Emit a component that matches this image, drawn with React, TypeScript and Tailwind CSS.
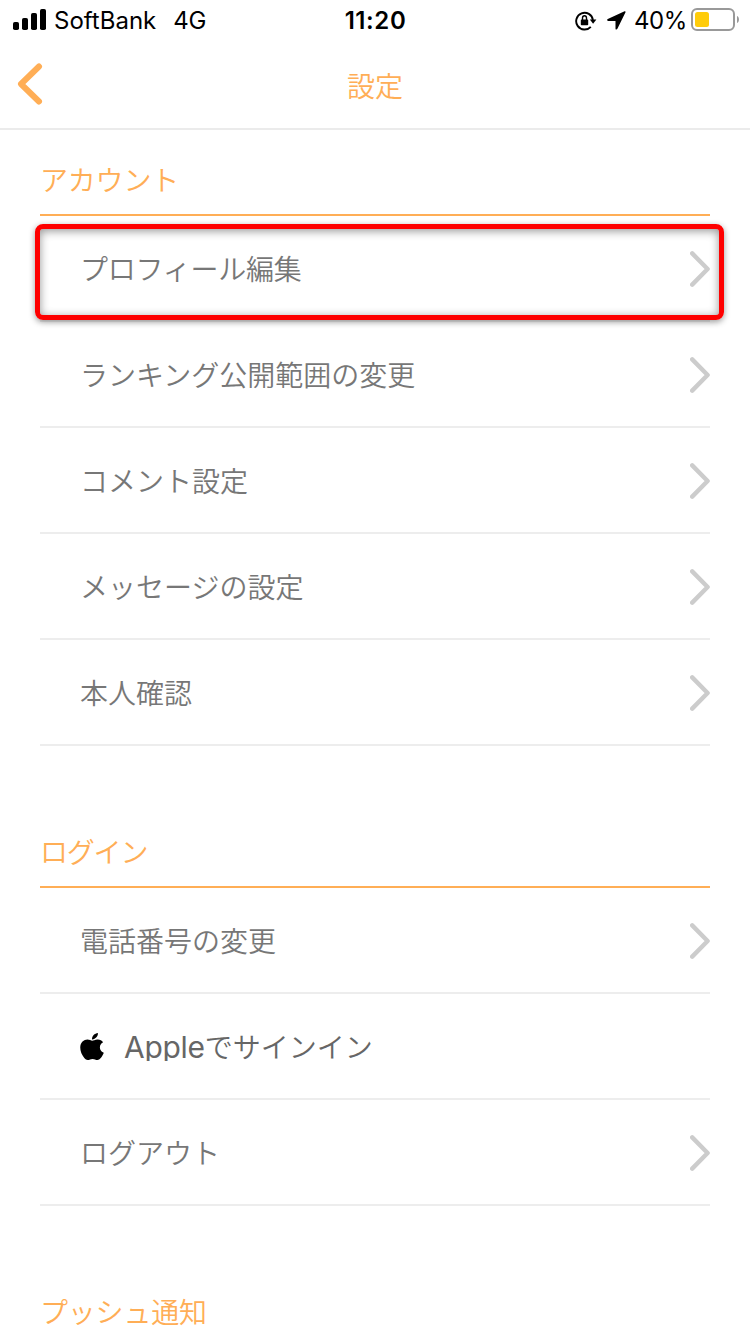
import { FaApple } from "react-icons/fa";

interface Item {
    label: string,
    highlighted?: boolean,
    apple?: boolean
}

interface SettingsSectionProps {
    title: string,
    items: Item[],
    tight?: boolean
}

const accountItems: Item[] = [
    { label: "プロフィール編集", highlighted: true },
    { label: "ランキング公開範囲の変更" },
    { label: "コメント設定" },
    { label: "メッセージの設定" },
    { label: "本人確認" },
]

const loginItems: Item[] = [
    { label: "電話番号の変更" },
    { label: "でサインイン", apple: true },
    { label: "ログアウト" },
]

const StatusBar = () => {
    return (
        <div className="grid grid-cols-3 items-center h-10 pl-[13px] pr-[11px] text-[24px] leading-10 font-normal text-black font-['Inter','Liberation_Sans',sans-serif]">
            <div className="flex items-center whitespace-nowrap">
                <svg className="w-[33px] h-[21px] mr-2 -mt-0.5" viewBox="0 0 33 21">
                    <rect x="0" y="13" width="6" height="8" rx="1.8" />
                    <rect x="9" y="9" width="6" height="12" rx="1.8" />
                    <rect x="18" y="4" width="6" height="17" rx="1.8" />
                    <rect x="27" y="0" width="6" height="21" rx="1.8" />
                </svg>
                <span className="pt-px">SoftBank</span>
                <span className="ml-[17px] pt-px tracking-[-0.3px]">4G</span>
            </div>
            <div className="text-center font-semibold tracking-[0.6px] pt-px pr-px">11:20</div>
            <div className="flex items-center justify-end whitespace-nowrap">
                <svg className="w-[22px] h-5 mr-[10px] shrink-0" viewBox="0 0 22 20" fill="none" stroke="#000">
                    <path d="M17.9 9A8.4 8.4 0 1 0 15.8 15.8" strokeWidth="1.9" />
                    <path d="M14.8 8.4h6.6l-3.3 4.4z" fill="#000" stroke="none" />
                    <rect x="5.8" y="8.6" width="7.4" height="5.6" rx="0.8" fill="#000" stroke="none" />
                    <path d="M7.5 9V7a2 2.3 0 0 1 4 0v2" strokeWidth="1.4" />
                </svg>
                <svg className="w-[19px] h-[19px] mr-2 shrink-0" viewBox="0 0 19 19">
                    <path d="M17.6.3.8 8.1c-1.1.5-.9 1.8.4 1.8h7.3v7.5c0 1.4 1.3 1.6 1.9.4L18.5 1.3c.3-.7-.2-1.3-.9-1z" />
                </svg>
                <span className="pt-px tracking-[-0.4px]">40%</span>
                <svg className="w-12 h-[23px] ml-1 -mt-0.5 shrink-0" viewBox="0 0 48 23">
                    <rect x="1" y="1" width="42" height="21" rx="5" fill="none" stroke="#999" strokeWidth="2" />
                    <rect x="4" y="4" width="14" height="15" rx="2.5" fill="#ffcc0a" />
                    <path d="M46 8c2.6.6 2.6 6.4 0 7z" fill="#999" />
                </svg>
            </div>
        </div>
    )
}

const SettingsRow = ({ label, highlighted, apple }: Item) => {
    return (
        <li className="relative flex items-center justify-between h-[106px] pl-10 pt-0.5 border-b-2 border-[#ededed]">
            {apple ? (
                <div className="flex items-center text-[#666]">
                    <FaApple className="w-6 h-[31px] mr-5 -mt-0.5 text-black" preserveAspectRatio="none" />
                    <span className="h-[32px] -mt-1 overflow-hidden text-[30px] leading-[36px] tracking-[-0.3px] font-['Inter',sans-serif] font-normal">Apple</span>
                    <span className="-mt-0.5">{label}</span>
                </div>
            ) : (
                <span className={`-mt-0.5 text-[#777] ${highlighted ? "tracking-[-0.25px]" : ""}`}>{label}</span>
            )}
            {!apple && (
                <svg className="w-5 h-9" viewBox="0 0 20 36" fill="none" stroke="#ccc" strokeWidth="4.4" strokeLinecap="round" strokeLinejoin="round">
                    <path d="M2.2 2.4L17.6 18 2.2 33.6" />
                </svg>
            )}
            {highlighted && (
                <div className="absolute -left-[5px] top-2 w-[689px] h-24 rounded-lg border-5 border-[#fe0000] shadow-[0_2px_6px_rgba(0,0,0,0.4),inset_0_2px_10px_rgba(0,0,0,0.42)]"></div>
            )}
        </li>
    )
}

const SettingsSection = ({ title, items, tight }: SettingsSectionProps) => {
    return (
        <section className="px-10 mb-14">
            <h2 className={`flex items-center h-[86px] pt-3.5 border-b-2 border-[#ffae56] text-[#ffae56] ${tight ? "tracking-[-1.2px]" : "tracking-[-0.2px]"}`}>{title}</h2>
            <ul>
                {items.map((item) => (
                    <SettingsRow key={item.label} {...item} />
                ))}
            </ul>
        </section>
    )
}

const App = () => {
    return (
        <div className="w-[750px] h-[1334px] overflow-hidden bg-white text-[28px] leading-10 font-[350] font-['Noto_Sans_CJK_JP',sans-serif]" lang="ja">
            <StatusBar />
            <header className="grid grid-cols-3 items-center h-[90px] border-b-2 border-[#ebebeb] text-[#ffae56]">
                <svg className="w-[26px] h-[42px] ml-[17px]" viewBox="0 0 26 42" fill="none" stroke="currentColor" strokeWidth="6" strokeLinecap="round" strokeLinejoin="round">
                    <path d="M22 3.5L4 21l18 17.5" />
                </svg>
                <h1 className="text-center pt-0.5">設定</h1>
            </header>
            <SettingsSection title="アカウント" items={accountItems} />
            <SettingsSection title="ログイン" items={loginItems} tight />
            <SettingsSection title="プッシュ通知" items={[]} />
        </div>
    )
}

export default App
